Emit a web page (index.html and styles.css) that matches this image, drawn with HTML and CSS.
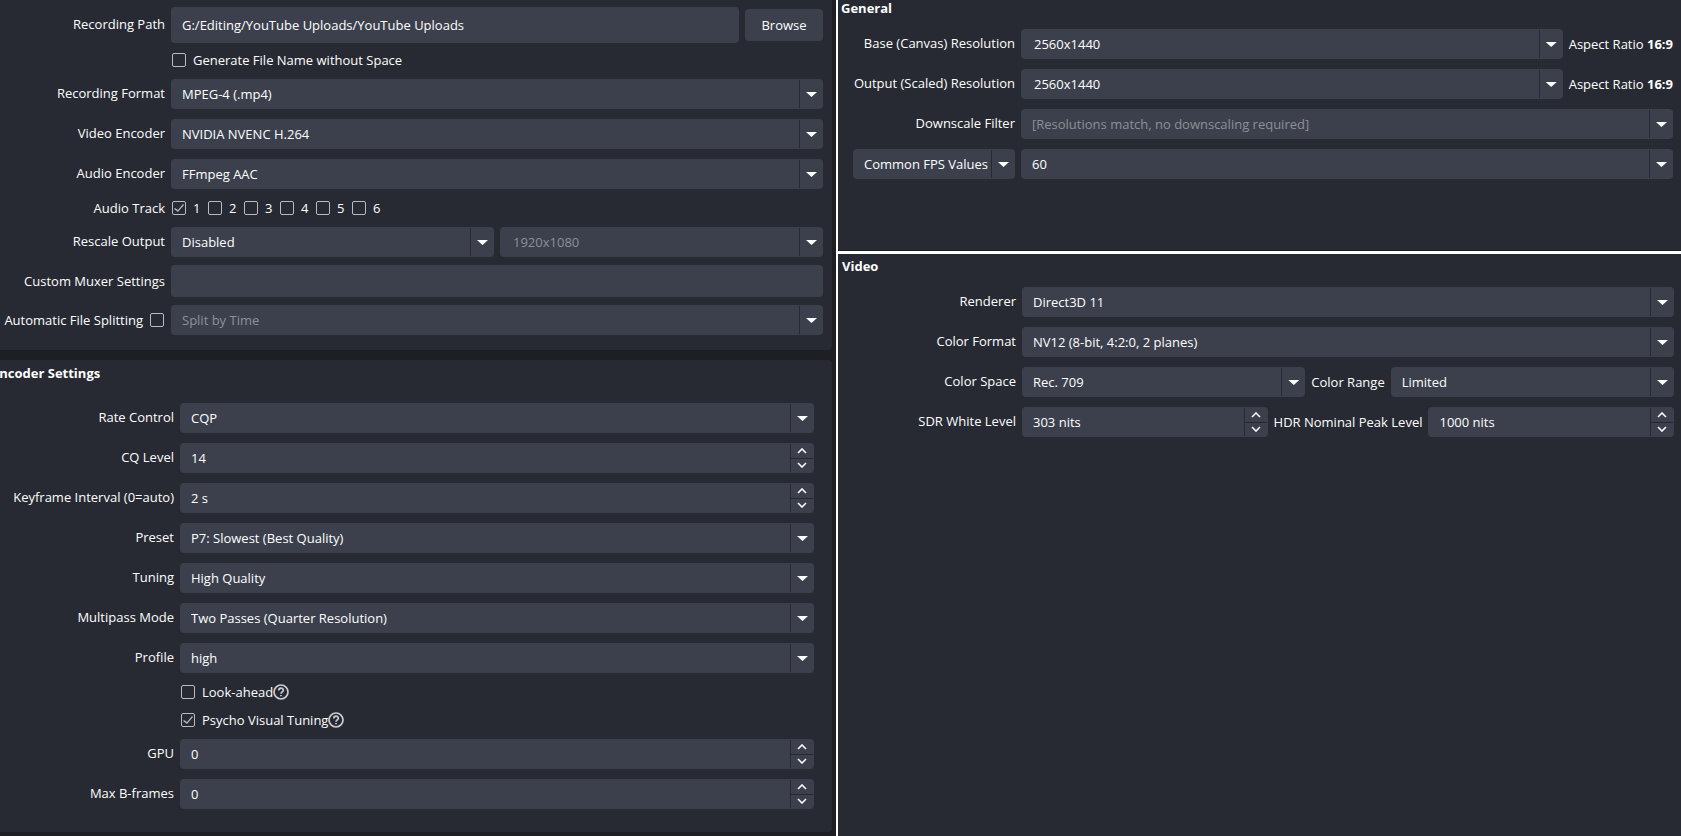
FILE: index.html
```html
<!DOCTYPE html>
<html lang="en">
<head>
  <meta charset="UTF-8">
  <meta name="viewport" content="width=device-width, initial-scale=1">
  <title>Recording Settings</title>
  <link rel="stylesheet" href="styles.css">
</head>
<body>

  <!-- arrows and help icon, reused below -->
  <svg class="sprite" aria-hidden="true">
    <symbol id="up" viewBox="0 0 10 6"><path d="M1 5 L5 1 L9 5" /></symbol>
    <symbol id="down" viewBox="0 0 10 6"><path d="M1 1 L5 5 L9 1" /></symbol>
    <symbol id="help" viewBox="0 0 16 16">
      <circle cx="8" cy="8" r="7" />
      <path d="M5.8 6.6 C5.8 3.4 10.3 3.5 10.3 6.3 C10.3 7.8 8 8 8 9.7" />
      <path d="M8 10.9 V12.3" />
    </symbol>
  </svg>

  <main class="settings">

    <div class="output">
      <section class="panel recording">
        <div class="form">
          <label class="name" for="path">Recording Path</label>
          <div class="row">
            <input class="field path" type="text" id="path" value="G:/Editing/YouTube Uploads/YouTube Uploads">
            <button class="browse" type="button">Browse</button>
          </div>

          <label class="check no-space"><input type="checkbox">Generate File Name without Space</label>

          <label class="name" for="format">Recording Format</label>
          <div class="combo"><select id="format"><option>MPEG-4 (.mp4)</option></select></div>

          <label class="name" for="vencoder">Video Encoder</label>
          <div class="combo"><select id="vencoder"><option>NVIDIA NVENC H.264</option></select></div>

          <label class="name" for="aencoder">Audio Encoder</label>
          <div class="combo"><select id="aencoder"><option>FFmpeg AAC</option></select></div>

          <span class="name flat">Audio Track</span>
          <div class="tracks">
            <label class="check"><input type="checkbox" checked>1</label>
            <label class="check"><input type="checkbox">2</label>
            <label class="check"><input type="checkbox">3</label>
            <label class="check"><input type="checkbox">4</label>
            <label class="check"><input type="checkbox">5</label>
            <label class="check"><input type="checkbox">6</label>
          </div>
        </div>

        <div class="form tight">
          <label class="name" for="rescale">Rescale Output</label>
          <div class="row">
            <div class="combo"><select id="rescale"><option>Disabled</option></select></div>
            <div class="combo editable"><select aria-label="Rescale resolution" disabled><option>1920x1080</option></select></div>
          </div>

          <label class="name flat" for="muxer">Custom Muxer Settings</label>
          <input class="field" type="text" id="muxer">

          <label class="check split">Automatic File Splitting<input type="checkbox"></label>
          <div class="combo"><select aria-label="File splitting mode" disabled><option>Split by Time</option></select></div>
        </div>
      </section>

      <section class="panel encoder">
        <h2>Encoder Settings</h2>
        <div class="form">
          <label class="name" for="rate">Rate Control</label>
          <div class="combo"><select id="rate"><option>CQP</option></select></div>

          <label class="name" for="cq">CQ Level</label>
          <div class="spin">
            <input type="text" id="cq" value="14">
            <div class="steps">
              <button type="button" aria-label="Increase"><svg><use href="#up" /></svg></button>
              <button type="button" aria-label="Decrease"><svg><use href="#down" /></svg></button>
            </div>
          </div>

          <label class="name" for="keyframe">Keyframe Interval (0=auto)</label>
          <div class="spin">
            <input type="text" id="keyframe" value="2 s">
            <div class="steps">
              <button type="button" aria-label="Increase"><svg><use href="#up" /></svg></button>
              <button type="button" aria-label="Decrease"><svg><use href="#down" /></svg></button>
            </div>
          </div>

          <label class="name" for="preset">Preset</label>
          <div class="combo"><select id="preset"><option>P7: Slowest (Best Quality)</option></select></div>

          <label class="name" for="tuning">Tuning</label>
          <div class="combo"><select id="tuning"><option>High Quality</option></select></div>

          <label class="name" for="multipass">Multipass Mode</label>
          <div class="combo"><select id="multipass"><option>Two Passes (Quarter Resolution)</option></select></div>

          <label class="name" for="profile">Profile</label>
          <div class="combo"><select id="profile"><option>high</option></select></div>

          <label class="check"><input type="checkbox">Look-ahead<svg class="help"><use href="#help" /></svg></label>
          <label class="check"><input type="checkbox" checked>Psycho Visual Tuning<svg class="help"><use href="#help" /></svg></label>

          <label class="name" for="gpu">GPU</label>
          <div class="spin">
            <input type="text" id="gpu" value="0">
            <div class="steps">
              <button type="button" aria-label="Increase"><svg><use href="#up" /></svg></button>
              <button type="button" aria-label="Decrease"><svg><use href="#down" /></svg></button>
            </div>
          </div>

          <label class="name" for="bframes">Max B-frames</label>
          <div class="spin">
            <input type="text" id="bframes" value="0">
            <div class="steps">
              <button type="button" aria-label="Increase"><svg><use href="#up" /></svg></button>
              <button type="button" aria-label="Decrease"><svg><use href="#down" /></svg></button>
            </div>
          </div>
        </div>
      </section>
    </div>

    <div class="side">
      <section class="general">
        <h2>General</h2>
        <div class="form">
          <label class="name" for="base">Base (Canvas) Resolution</label>
          <div class="row">
            <div class="combo editable"><select id="base"><option>2560x1440</option></select></div>
            <span>Aspect Ratio <b>16:9</b></span>
          </div>

          <label class="name" for="scaled">Output (Scaled) Resolution</label>
          <div class="row">
            <div class="combo editable"><select id="scaled"><option>2560x1440</option></select></div>
            <span>Aspect Ratio <b>16:9</b></span>
          </div>

          <label class="name" for="filter">Downscale Filter</label>
          <div class="combo"><select id="filter" disabled><option>[Resolutions match, no downscaling required]</option></select></div>

          <div class="combo"><select aria-label="FPS type"><option>Common FPS Values</option></select></div>
          <div class="combo"><select aria-label="FPS"><option>60</option></select></div>
        </div>
      </section>

      <section class="video">
        <h2>Video</h2>
        <div class="form">
          <label class="name" for="renderer">Renderer</label>
          <div class="combo"><select id="renderer"><option>Direct3D 11</option></select></div>

          <label class="name" for="color-format">Color Format</label>
          <div class="combo"><select id="color-format"><option>NV12 (8-bit, 4:2:0, 2 planes)</option></select></div>

          <label class="name" for="color-space">Color Space</label>
          <div class="row">
            <div class="combo"><select id="color-space"><option>Rec. 709</option></select></div>
            <label for="color-range">Color Range</label>
            <div class="combo"><select id="color-range"><option>Limited</option></select></div>
          </div>

          <label class="name" for="sdr">SDR White Level</label>
          <div class="row">
            <div class="spin">
              <input type="text" id="sdr" value="303 nits">
              <div class="steps">
                <button type="button" aria-label="Increase"><svg><use href="#up" /></svg></button>
                <button type="button" aria-label="Decrease"><svg><use href="#down" /></svg></button>
              </div>
            </div>
            <label for="hdr">HDR Nominal Peak Level</label>
            <div class="spin">
              <input type="text" id="hdr" value="1000 nits">
              <div class="steps">
                <button type="button" aria-label="Increase"><svg><use href="#up" /></svg></button>
                <button type="button" aria-label="Decrease"><svg><use href="#down" /></svg></button>
              </div>
            </div>
          </div>
        </div>
      </section>
    </div>

  </main>

</body>
</html>
```

FILE: styles.css
```css
* {
  box-sizing: border-box;
}

body {
  margin: 0;
  background: #272a33;
  color: #fefefe;
  font-family: "Open Sans", "Noto Sans", sans-serif;
  font-size: 13px;
  line-height: 16px;
}

input, select, button {
  margin: 0;
  border: 0;
  border-radius: 4px;
  background: #3c404d;
  color: inherit;
  font: inherit;
}

h2 {
  margin: 0 0 13px;
  font-size: 13px;
  font-weight: bold;
}

.sprite {
  display: none;
}

svg {
  fill: none;
  stroke: #fefefe;
}

.settings {
  display: grid;
  grid-template-columns: 838fr 843fr;
  min-height: 100vh;
}

.output {
  display: flex;
  flex-direction: column;
  gap: 10px;
  padding: 0 4px 4px 0;
  border-right: 2px solid #fff;
  background: #1d1f24;
  overflow: hidden;
}

.panel {
  background: #272a33;
}

.recording {
  padding: 7px 9px 15px 0;
  border-radius: 0 0 4px 0;
}

.encoder {
  flex: 1;
  padding: 5px 18px 23px 0;
  border-radius: 0 4px 4px 0;
}

/* the title runs off the left edge of the window */
.encoder h2 {
  margin: 0 0 22px -8px;
}

.general {
  padding: 0 8px 71px 3px;
  border-bottom: 1px solid #1d1f24;
}

.video {
  padding: 4px 7px 0 4px;
  border-top: 3px solid #fff;
}

/* forms */
.form {
  display: grid;
  grid-template-columns: 165px minmax(0, 1fr);
  gap: 10px 6px;
}

.form.tight {
  row-gap: 8px;
  margin-top: 10px;
}

.encoder .form {
  grid-template-columns: 174px minmax(0, 1fr);
}

.general .form {
  grid-template-columns: 162px minmax(0, 1fr);
  padding-left: 12px;
}

.video .form {
  grid-template-columns: 174px minmax(0, 1fr);
}

.name {
  align-self: center;
  padding-bottom: 2px;
  text-align: right;
  white-space: nowrap;
}

.name.flat {
  padding-bottom: 0;
}

.row {
  display: flex;
  align-items: center;
  gap: 6px;
  white-space: nowrap;
}

.row .combo, .row .spin {
  flex: 1;
  min-width: 0;
}

.field {
  width: 100%;
  height: 32px;
  padding: 0 11px;
}

.path {
  flex: 1;
  height: 36px;
}

.browse {
  width: 78px;
  height: 32px;
}

/* drop-downs */
.combo {
  position: relative;
  height: 30px;
}

.combo select {
  display: block;
  width: 100%;
  height: 30px;
  padding: 0 24px 0 11px;
  appearance: none;
}

.combo.editable select {
  padding-left: 13px;
}

.combo select:disabled {
  color: #8d8f96;
  opacity: 1;
}

.combo::before {
  content: "";
  position: absolute;
  top: 1px;
  bottom: 1px;
  right: 23px;
  width: 1px;
  background: #272a33;
  pointer-events: none;
}

.combo::after {
  content: "";
  position: absolute;
  top: 13px;
  right: 6px;
  width: 11px;
  height: 5px;
  background: #fefefe;
  clip-path: polygon(0 0, 100% 0, 50% 100%);
  pointer-events: none;
}

/* number boxes */
.spin {
  display: flex;
  height: 30px;
  padding: 1px;
  border-radius: 4px;
  background: #3c404d;
}

.spin input {
  flex: 1;
  min-width: 0;
  padding: 0 10px;
}

.steps {
  display: flex;
  flex-direction: column;
  width: 23px;
  border-left: 1px solid #272a33;
}

.steps button {
  display: flex;
  flex: 1;
  align-items: center;
  justify-content: center;
  padding: 0;
}

.steps button + button {
  border-top: 1px solid #272a33;
  border-radius: 0;
}

.steps svg {
  width: 10px;
  height: 6px;
  stroke-width: 1.6;
}

/* tick boxes */
.check {
  display: flex;
  grid-column: 2;
  align-items: center;
  height: 18px;
  padding-left: 1px;
  white-space: nowrap;
}

.check input {
  flex: none;
  width: 14px;
  height: 14px;
  margin-right: 7px;
  border: 1px solid #b9bbc1;
  border-radius: 2px;
  background: none;
  appearance: none;
}

.check input:checked::before {
  content: "";
  display: block;
  width: 12px;
  height: 12px;
  background: #b0b2b8;
  clip-path: polygon(1px 7px, 2px 6px, 5px 8px, 10px 2px, 11px 3px, 5px 10px);
}

.no-space {
  height: 14px;
  margin-bottom: 2px;
}

.tracks {
  display: flex;
}

.tracks .check {
  width: 36px;
}

.split {
  grid-column: 1;
  justify-content: flex-end;
  height: auto;
}

.split input {
  margin: 0 1px 0 7px;
}

.help {
  width: 16px;
  height: 16px;
  stroke: #cbccd0;
  stroke-width: 1.7;
}
```
